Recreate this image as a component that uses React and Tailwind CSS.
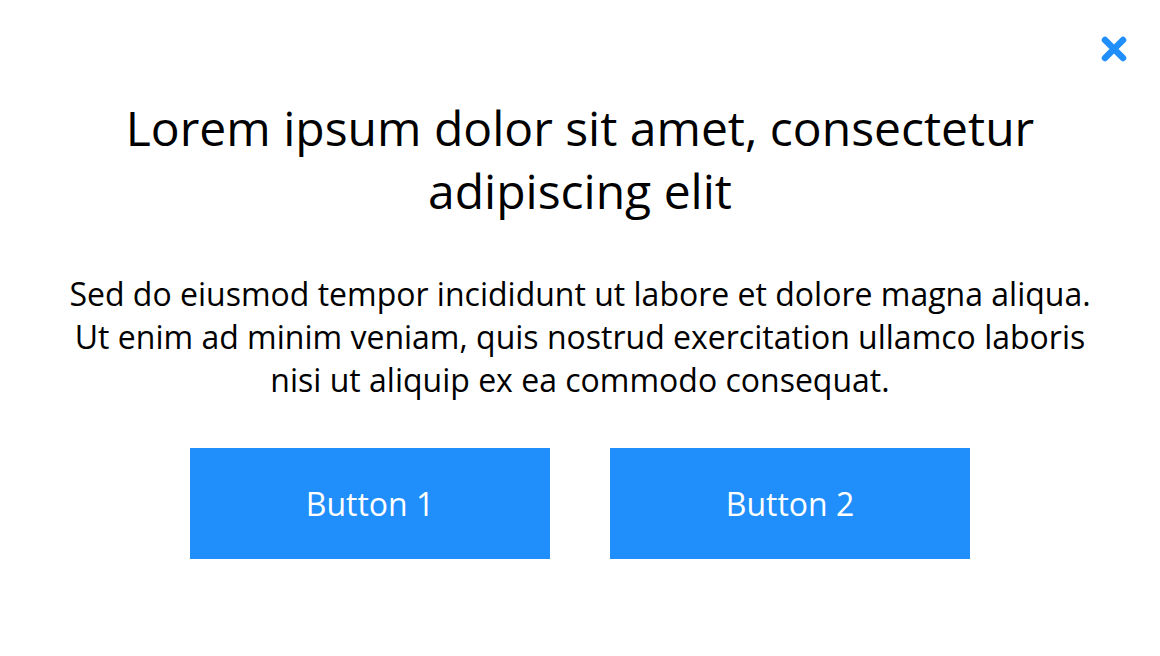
export default function App() {
  return (
    <div
      className="relative h-[656px] w-full bg-white"
      style={{ fontFamily: '"Open Sans", sans-serif' }}
    >
      <button
        aria-label="Close"
        className="absolute right-[32px] top-[35px] flex h-[28px] w-[28px] items-center justify-center"
      >
        <svg viewBox="0 0 28 28" width="28" height="28">
          <path
            d="M5 5L23 23M23 5L5 23"
            stroke="#218ffb"
            strokeWidth="6.5"
            strokeLinecap="round"
          />
        </svg>
      </button>
      <div className="flex flex-col items-center px-[30px] pt-[96px] text-center">
        <h1 className="text-[48px] font-normal leading-[63px] text-black">
          Lorem ipsum dolor sit amet, consectetur
          <br />
          adipiscing elit
        </h1>
        <p className="mt-[50px] text-[32px] leading-[43px] text-black">
          Sed do eiusmod tempor incididunt ut labore et dolore magna aliqua.
          <br />
          Ut enim ad minim veniam, quis nostrud exercitation ullamco laboris
          <br />
          nisi ut aliquip ex ea commodo consequat.
        </p>
        <div className="mt-[47px] flex gap-[60px]">
          <button className="h-[111px] w-[360px] bg-[#218ffb] text-[32px] text-white">
            Button 1
          </button>
          <button className="h-[111px] w-[360px] bg-[#218ffb] text-[32px] text-white">
            Button 2
          </button>
        </div>
      </div>
    </div>
  );
}
